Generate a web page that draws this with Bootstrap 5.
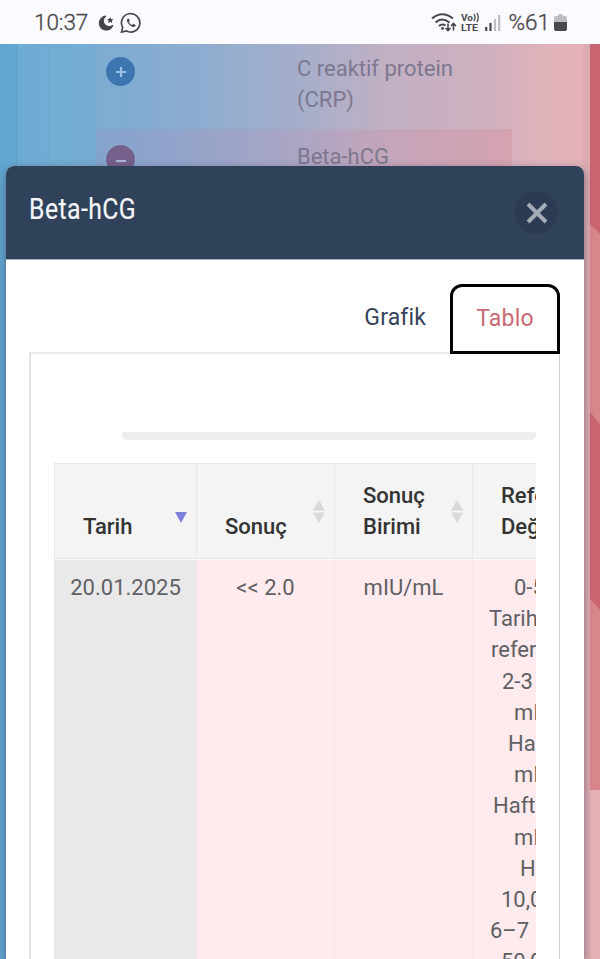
<!DOCTYPE html>
<html lang="tr">
<head>
<meta charset="utf-8">
<meta name="viewport" content="width=device-width, initial-scale=1">
<title>Beta-hCG</title>
<link href="https://cdn.jsdelivr.net/npm/bootstrap@5.3.0/dist/css/bootstrap.min.css" rel="stylesheet">
<style>
body{font-family:Roboto,"Liberation Sans",sans-serif;font-size:22px;line-height:31.2px;height:959px;overflow:hidden;background:#fbfaff}
.status{height:44px;background:#fbfaff;color:#49484c;padding:2px 33px 0 34px}
.clock{font-size:22.500px;font-weight:300;-webkit-text-stroke:.35px #49484c}
.clock.time{width:54px;letter-spacing:-.1px;white-space:nowrap}
.status svg{flex:none;display:block}
.stage{height:915px;background:#5f9fca}
.edge-l{width:17px;flex:none;background:linear-gradient(90deg,#5fa5d1,#62a8d3);border-right:1px solid #5c9fc7}
.sheet{background:linear-gradient(90deg,#6cacd4 0,#70acd3 31px,#6ba8d0 31px,#6ba8d0 32px,#72add3 32px,#76acd3 79px,#7cabd2 80px,#8badd0 170px,#a5aecb 283px,#c1b0c3 370px,#cfb0be 470px,#deb2ba 520px,#e4b1b8 566px);padding-left:79px}
.results{width:416px;flex:none}
.results-row{height:85px}
.results-row.hot{background:linear-gradient(90deg,rgba(155,140,190,.28),rgba(190,140,175,.25) 50%,rgba(215,140,155,.38));height:90px}
.results-row>span{color:#7d7790;padding-top:9px;padding-left:162px;width:400px}
.results-row.hot>span{padding-top:12px}
.disc{width:29px;height:29px;flex:none;margin:13px 0 0 10px;background:#3e77af;box-shadow:0 0 3px #8ab7dd}
.disc.minus{background:#74608a;margin-top:16px}
.edge-r{width:17px;flex:none}
.edge-r svg{display:block}
.panel{left:6px;top:166px;width:578px;height:793px;border-radius:8px 8px 0 0;box-shadow:0 3px 9px rgba(60,50,80,.55);overflow:hidden}
.panel-head{background:#30415a;height:94px;padding:0 26px 0 23px;border-bottom:1px solid #a9b0bb}
.panel-title{font-size:29px;line-height:36px;font-weight:400;color:#f3f5f8;margin-top:25px;letter-spacing:.5px;-webkit-text-stroke:.2px #f3f5f8;transform:scaleX(.855);transform-origin:0 0}
.closer{width:43px;height:43px;border-radius:50%;background:#2a3b53;border:0;padding:0;margin-top:25px}
.tabs{padding:24px 24px 0 0;height:92px}
.tab-a{color:#34435b;font-size:23px;letter-spacing:.15px;padding:18px 24px 0 0}
.tab-b{color:#c86b75;font-size:23px;letter-spacing:.2px;width:110px;height:70px;border:3px solid #000;border-radius:12px 12px 0 0;padding-top:16px;z-index:2}
.pane{margin:0 24px 0 23px;border:solid #e2e2e2;border-width:2px 1px 0 2px;border-top-color:#e9e9e9;border-right-color:#d2d2d4;height:607px;padding:78px 23px 0 23px}
.track{height:8px;margin-left:68px;background:#eee;border-radius:0 0 5px 5px}
.clip{margin-top:23px;width:482px}
.grid{table-layout:fixed;width:557px;border-collapse:separate;border-spacing:0}
.grid th{height:96px;background:#f4f4f4;color:#333;font-weight:500;vertical-align:bottom;padding:0 0 16px 28px;border:solid #e4e8ea;border-width:1px 0 1px 1px;position:relative}
.grid td{background:#ffebed;color:#606064;vertical-align:top;text-align:center;padding:12px 0 0;height:410px;border-left:1px solid #f5e6ea;border-top:1px solid #f9f9f9}
.grid td:first-child{background:#e9e9e9;border-left-color:#e4e6e8}
.grid .ref{text-align:left;white-space:nowrap}
.sorter{position:absolute;right:8px;top:36px;display:block}
</style>
</head>
<body>
<header class="status d-flex align-items-center">
  <span class="clock time">10:37</span>
  <svg class="ms-2" width="20" height="20" viewBox="0 0 20 20"><path d="M9.500 3.200a6.900 6.900 0 1 0 7.200 9.400A5.600 5.600 0 0 1 9.500 3.200z" fill="#454448" stroke="#454448" stroke-width="1.300" stroke-linejoin="round"/><path d="m14.200 4 1 2 2.200.3-1.600 1.500.4 2.200-2-1-2 1 .4-2.200-1.600-1.500 2.200-.3z" fill="#454448"/></svg>
  <svg width="22" height="22" viewBox="0 0 21 22" class="ms-1"><path d="M1 20.200 2.200 15.400A9.200 9.200 0 1 1 6 19z" fill="none" stroke="#49484c" stroke-width="1.700"/><path d="M7.600 6.400c-1.500.4-1.600 2.600-.2 4.600 1.700 2.500 4.100 4.200 6 3.900 1.600-.3 2-1.600 1.600-2l-2-1.100-1.400 1.100c-1.600-.7-2.600-1.700-3.200-3l.9-1.200-.9-2z" fill="#49484c"/></svg>
  <div class="ms-auto d-flex align-items-center">
    <svg width="73" height="24" viewBox="0 0 73 24"><g fill="none" stroke="#49484c" stroke-width="2"><path d="M1 7.500q10-8.500 21 0M4.500 11.500q6.500-6 14 0M8 15q3-2.800 6.500-.5"/><path d="M17 12.500v7m-2.500-2.500 2.500 2.500 2.500-2.500M22.500 19.500v-7M20 15l2.500-2.500L25 15" stroke-width="1.600"/></g><circle cx="11.500" cy="17.500" r="1.400" fill="#49484c"/>
      <g fill="#49484c" font-family="Roboto,sans-serif" font-weight="700"><text x="30" y="9.500" font-size="9" textLength="12" lengthAdjust="spacingAndGlyphs">Vo</text><text x="30" y="20.300" font-size="9.200" textLength="17" lengthAdjust="spacingAndGlyphs">LTE</text></g><path d="M43 3q2 3 0 7M46 2q2.500 4 0 9" fill="none" stroke="#49484c" stroke-width="1.300"/>
      <path d="M55.200 16v4M59.500 12v8" stroke="#49484c" stroke-width="2.200"/><path d="M64 8v12M68.200 4v16" stroke="#bdbcc1" stroke-width="2.200"/></svg>
    <span class="clock ms-1">%61</span>
    <svg width="13" height="18" viewBox="0 0 13 18" class="ms-1"><path d="M0 8V4q0-2 2-2h1.500Q4 0 6.500 0T9.500 2H11q2 0 2 2v4z" fill="#bfbec2"/><path d="M0 8h13v7q0 2-2 2H2q-2 0-2-2z" fill="#49484c"/></svg>
  </div>
</header>
<main class="stage d-flex">
  <div class="edge-l"></div>
  <div class="sheet flex-grow-1">
    <div class="results">
      <div class="results-row d-flex"><div class="disc rounded-circle d-flex"><svg class="m-auto" width="12" height="12"><path d="M1 6h10M6 1v10" stroke="#9bc0e0" stroke-width="2.200"/></svg></div><span>C reaktif protein<br>(CRP)</span></div>
      <div class="results-row hot d-flex"><div class="disc minus rounded-circle d-flex"><svg class="m-auto" width="12" height="12"><path d="M1 7h10" stroke="#b0b2d8" stroke-width="2.200"/></svg></div><span>Beta-hCG</span></div>
    </div>
  </div>
  <div class="edge-r"><svg width="17" height="915"><path fill="#dcabb1" d="M0 0h7v915H0z"/><path fill="#c96570" d="M7 0h10v915H7z"/><path fill="#d9858c" d="M7 180 17 190V380L7 368zM7 555 17 566V746H7z"/><path fill="#e4b1b6" d="M7 746h10v169H7z"/></svg></div>
</main>
<section class="panel position-absolute bg-white">
  <div class="panel-head d-flex justify-content-between align-items-start">
    <h1 class="panel-title mb-0">Beta-hCG</h1>
    <button class="closer d-flex" aria-label="Kapat"><svg class="m-auto" width="24" height="24"><path d="m3 3 18 18M21 3 3 21" stroke="#a4acb7" stroke-width="4"/></svg></button>
  </div>
  <nav class="tabs d-flex justify-content-end">
    <span class="tab-a">Grafik</span>
    <span class="tab-b text-center position-relative flex-shrink-0">Tablo</span>
  </nav>
  <div class="pane">
    <div class="track"></div>
    <div class="clip overflow-hidden">
      <table class="grid">
        <colgroup><col style="width:142px"><col style="width:138px"><col style="width:138px"><col style="width:139px"></colgroup>
        <thead><tr>
          <th>Tarih<svg class="sorter" width="14" height="34"><path d="M1 12h12L7 23z" fill="#8080dc"/></svg></th>
          <th>Sonuç<svg class="sorter" width="14" height="34"><path d="M1 10.500h12L7 0zM1 12.500h12L7 23z" fill="#d9d9d9"/></svg></th>
          <th>Sonuç Birimi<svg class="sorter" width="14" height="34"><path d="M1 10.500h12L7 0zM1 12.500h12L7 23z" fill="#d9d9d9"/></svg></th>
          <th>Referans Değerleri</th>
        </tr></thead>
        <tbody><tr>
          <td>20.01.2025</td><td>&lt;&lt; 2.0</td><td>mIU/mL</td>
          <td class="ref">
            <div style="padding-left:41px">0-5</div>
            <div style="padding-left:16px">Tarihi</div>
            <div style="padding-left:18px">referans</div>
            <div style="padding-left:29px">2-3</div>
            <div style="padding-left:41px">mIU</div>
            <div style="padding-left:35px">Ha</div>
            <div style="padding-left:41px">mIU</div>
            <div style="padding-left:20px">Haft</div>
            <div style="padding-left:41px">mIU</div>
            <div style="padding-left:47px">H</div>
            <div style="padding-left:28px">10,0</div>
            <div style="padding-left:17px">6–7</div>
            <div style="padding-left:28px">50,0</div>
          </td>
        </tr></tbody>
      </table>
    </div>
  </div>
</section>
<script src="https://cdn.jsdelivr.net/npm/bootstrap@5.3.0/dist/js/bootstrap.bundle.min.js"></script>
</body>
</html>
